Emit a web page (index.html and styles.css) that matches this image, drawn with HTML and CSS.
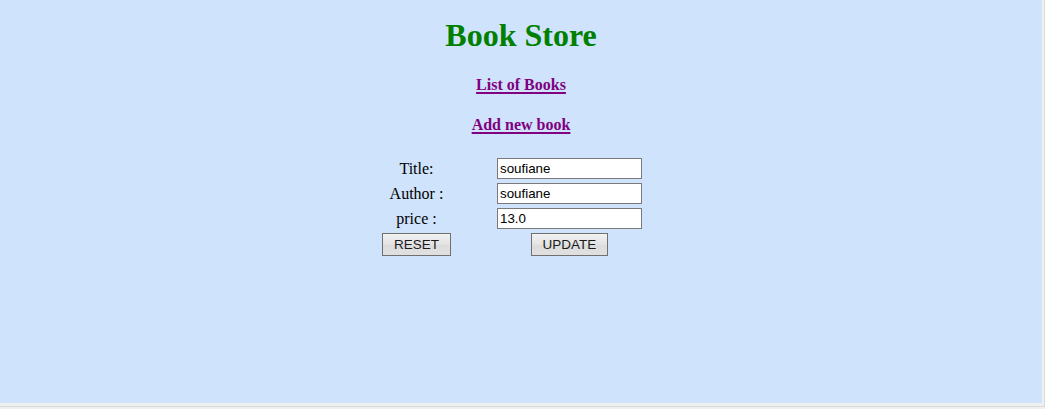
FILE: index.html
```html
<!DOCTYPE html>
<html lang="en">
<head>
<meta charset="utf-8">
<title>Book Store</title>
<link rel="stylesheet" href="styles.css">
</head>
<body>
<div class="window">
  <div class="page">
    <h1 class="title">Book Store</h1>
    <h4 class="nav"><a href="#">List of Books</a></h4>
    <h4 class="nav"><a href="#">Add new book</a></h4>
    <form class="book-form">
      <label class="label" for="title">Title:</label>
      <div class="field"><input class="input" id="title" type="text" value="soufiane"></div>
      <div class="extra"></div>

      <label class="label" for="author">Author :</label>
      <div class="field"><input class="input" id="author" type="text" value="soufiane"></div>
      <div class="extra"></div>

      <label class="label" for="price">price :</label>
      <div class="field"><input class="input" id="price" type="text" value="13.0"></div>
      <div class="extra"></div>

      <div class="cell"><button class="btn" type="reset">RESET</button></div>
      <div class="cell"><button class="btn" type="button">UPDATE</button></div>
      <div class="extra"></div>
    </form>
  </div>
</div>
</body>
</html>
```

FILE: styles.css
```css
html, body {
  margin: 0;
  padding: 0;
}

body {
  background: #f0f0f0;
  font-family: "Liberation Serif", "Times New Roman", serif;
  width: 1045px;
  height: 409px;
  overflow: hidden;
}

.window {
  width: 1044px;
  height: 406px;
  background: #f0f0f0;
  border-right: 1px solid #d9d9d9;
  border-bottom: 1px solid #d9d9d9;
}

.page {
  width: 1042px;
  height: 403px;
  background: #cfe3fc;
  text-align: center;
  overflow: hidden;
  display: flex;
  flex-direction: column;
  align-items: center;
}

.title {
  margin: 17px 0 0;
  font-size: 32px;
  line-height: 37px;
  font-weight: bold;
  color: #008000;
}

.nav {
  margin: 21px 0 0;
  font-size: 16px;
  line-height: 19px;
  font-weight: bold;
}

.nav a {
  color: #800080;
  text-decoration: underline;
  text-decoration-thickness: 2px;
  text-underline-offset: 2px;
}

.book-form {
  margin: 21px 0 0;
  padding: 2px;
  display: grid;
  grid-template-columns: 155px 147px 58px;
  grid-auto-rows: 23px;
  column-gap: 2px;
  row-gap: 2px;
}

.label {
  display: flex;
  align-items: center;
  justify-content: center;
  font-size: 16px;
  color: #000;
}

.field {
  padding: 1px;
  display: flex;
  align-items: center;
}

.input {
  box-sizing: border-box;
  width: 145px;
  height: 21px;
  margin: 0;
  padding: 0 2px;
  border: 1px solid #7a7a7a;
  background: #fff;
  font-family: "Liberation Sans", Arial, sans-serif;
  font-size: 13.33px;
  color: #000;
}

.cell {
  padding: 1px;
  display: flex;
  justify-content: center;
  align-items: flex-start;
}

.btn {
  box-sizing: border-box;
  height: 23px;
  margin: 0;
  padding: 0 10.5px;
  border: 1px solid #707070;
  border-radius: 0;
  background: linear-gradient(#f2f2f2, #e3e3e3 50%, #dcdcdc 50%, #e0e0e0);
  font-family: "Liberation Sans", Arial, sans-serif;
  font-size: 13.5px;
  color: #1a1a1a;
}
```
